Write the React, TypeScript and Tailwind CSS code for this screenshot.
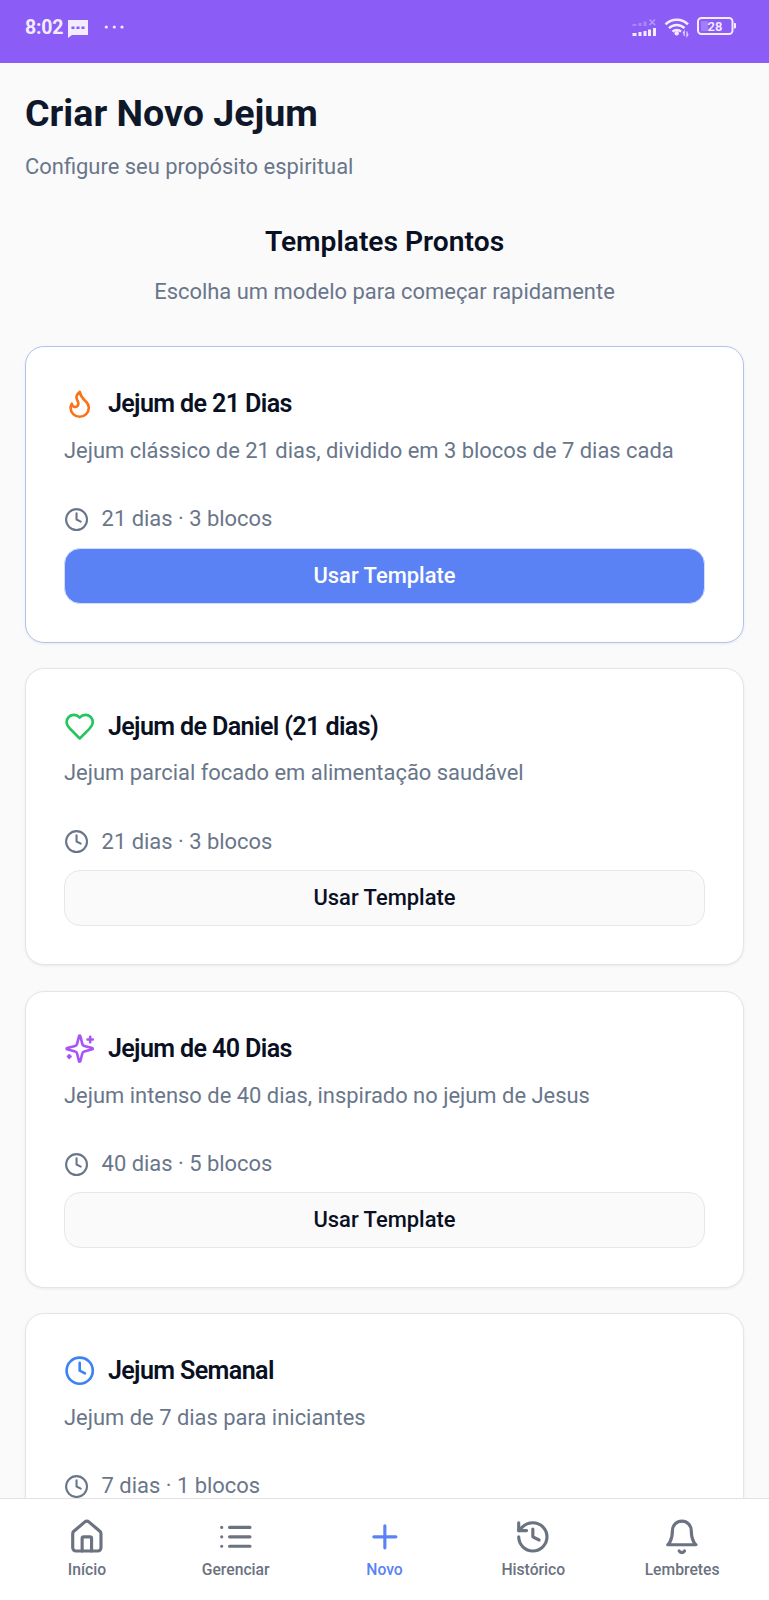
import React from "react";
import { Clock, Flame, Plus } from "lucide-react";

type IconProps = { className?: string };

const stroke = {
  viewBox: "0 0 24 24",
  fill: "none",
  stroke: "currentColor",
  strokeWidth: 2,
  strokeLinecap: "round" as const,
  strokeLinejoin: "round" as const,
};

const HouseIcon = ({ className }: IconProps) => (
  <svg {...stroke} className={className}>
    <path d="M15 21v-8a1 1 0 0 0-1-1h-4a1 1 0 0 0-1 1v8" />
    <path d="M3 10a2 2 0 0 1 .709-1.528l7-5.999a2 2 0 0 1 2.582 0l7 5.999A2 2 0 0 1 21 10v9a2 2 0 0 1-2 2H5a2 2 0 0 1-2-2z" />
  </svg>
);

const ListIcon = ({ className }: IconProps) => (
  <svg {...stroke} className={className}>
    <path d="M3 6h.01M3 12h.01M3 18h.01M8 6h13M8 12h13M8 18h13" />
  </svg>
);

const HistoryIcon = ({ className }: IconProps) => (
  <svg {...stroke} className={className}>
    <path d="M3 12a9 9 0 1 0 9-9 9.75 9.75 0 0 0-6.74 2.74L3 8" />
    <path d="M3 3v5h5" />
    <path d="M12 7v5l4 2" />
  </svg>
);

const BellIcon = ({ className }: IconProps) => (
  <svg {...stroke} className={className}>
    <path d="M6 8a6 6 0 0 1 12 0c0 7 3 9 3 9H3s3-2 3-9" />
    <path d="M10.3 21a1.94 1.94 0 0 0 3.4 0" />
  </svg>
);

const HeartIcon = ({ className }: IconProps) => (
  <svg {...stroke} className={className}>
    <path d="M19 14c1.49-1.46 3-3.21 3-5.5A5.5 5.5 0 0 0 16.5 3c-1.76 0-3 .5-4.5 2-1.5-1.5-2.74-2-4.5-2A5.5 5.5 0 0 0 2 8.5c0 2.3 1.5 4.05 3 5.5l7 7Z" />
  </svg>
);

const SparklesIcon = ({ className }: IconProps) => (
  <svg {...stroke} className={className}>
    <path d="M9.937 15.5A2 2 0 0 0 8.5 14.063l-6.135-1.582a.5.5 0 0 1 0-.962L8.5 9.936A2 2 0 0 0 9.937 8.5l1.582-6.135a.5.5 0 0 1 .963 0L14.063 8.5A2 2 0 0 0 15.5 9.937l6.135 1.581a.5.5 0 0 1 0 .964L15.5 14.063a2 2 0 0 0-1.437 1.437l-1.582 6.135a.5.5 0 0 1-.963 0z" />
    <path d="M20 3v4M22 5h-4M4 17v2M5 18H3" />
  </svg>
);

function StatusBar() {
  return (
    <header className="flex h-[63px] shrink-0 items-start justify-between bg-[#8b5cf6] pl-[25px] pr-[33px] text-[#f3ebff]">
      <div className="flex items-center pt-4">
        <span className="w-[38px] text-[19.5px] font-bold leading-[23px] tracking-[-0.01em]">8:02</span>
        <svg className="ml-[5px] mt-0.5 h-[18px] w-5" viewBox="0 0 20 18">
          <path d="M0 0h20v15H4l-4 3z" fill="currentColor" />
          <path d="M3.5 6.5h3v2.5h-3zM8.5 6.5h3v2.5h-3zM13.5 6.5h3v2.5h-3z" fill="#8b5cf6" />
        </svg>
        <svg className="ml-4 h-4 w-[22px]" viewBox="0 0 22 16">
          <g fill="currentColor">
            <circle cx="2.3" cy="7" r="1.6" />
            <circle cx="10.3" cy="7" r="1.6" />
            <circle cx="18" cy="7" r="1.6" />
          </g>
        </svg>
      </div>
      <svg className="mt-4 h-[22px] w-[104px]" viewBox="632 16 104 22">
        <path d="M632.5 24h4v2h-4zM638.5 23h3v3h-3zM643.5 21.5h3v4.5h-3z" fill="#ab86f9" />
        <path d="M649.5 19.5l5.5 5.5m0-5.5l-5.5 5.5" stroke="#b796fa" strokeWidth="1.7" />
        <path
          d="M632.5 33h4v3h-4zM638.5 32h3v4h-3zM643.5 31h3v5h-3zM648 29.5h3v6.5h-3zM653 28h3v8h-3z"
          fill="currentColor"
        />
        <g fill="none" stroke="currentColor" strokeWidth="2.5">
          <path d="M665.5 24.3a16 16 0 0 1 22.5 0" />
          <path d="M669 28.2a11 11 0 0 1 15.5 0" />
          <path d="M672.5 31.7a6 6 0 0 1 8.5 0" />
        </g>
        <circle cx="676.7" cy="33.3" r="2.2" fill="currentColor" />
        <path d="M684.2 36v-4.5l-1.2 1.8M687 31.5v4.5l1.2-1.8" fill="none" stroke="currentColor" strokeWidth="1.2" opacity=".85" />
        <rect x="698" y="18" width="34.5" height="16" rx="3.5" fill="none" stroke="currentColor" strokeWidth="2" />
        <rect x="701" y="21" width="7" height="10" rx="1" fill="#a67df8" />
        <path d="M734 23h1a1 1 0 0 1 1 1v3.5a1 1 0 0 1-1 1h-1z" fill="currentColor" />
        <text x="715" y="31" textAnchor="middle" fontSize="13" fontWeight="600" fill="currentColor">
          28
        </text>
      </svg>
    </header>
  );
}

type Template = {
  icon: React.ReactNode;
  title: string;
  description: string;
  info: string;
  featured?: boolean;
  action?: string;
};

const templates: Template[] = [
  {
    icon: <Flame className="size-[31.4px] text-[#f97316]" />,
    title: "Jejum de 21 Dias",
    description: "Jejum clássico de 21 dias, dividido em 3 blocos de 7 dias cada",
    info: "21 dias · 3 blocos",
    featured: true,
    action: "Usar Template",
  },
  {
    icon: <HeartIcon className="size-[31.4px] text-[#22c55e]" />,
    title: "Jejum de Daniel (21 dias)",
    description: "Jejum parcial focado em alimentação saudável",
    info: "21 dias · 3 blocos",
    action: "Usar Template",
  },
  {
    icon: <SparklesIcon className="size-[31.4px] text-[#a855f7]" />,
    title: "Jejum de 40 Dias",
    description: "Jejum intenso de 40 dias, inspirado no jejum de Jesus",
    info: "40 dias · 5 blocos",
    action: "Usar Template",
  },
  {
    icon: <Clock className="size-[31.4px] text-[#3b82f6]" />,
    title: "Jejum Semanal",
    description: "Jejum de 7 dias para iniciantes",
    info: "7 dias · 1 blocos",
  },
];

function TemplateCard({ icon, title, description, info, featured, action }: Template) {
  return (
    <article
      className={`h-[297.3px] shrink-0 rounded-[19px] border bg-white px-[38px] pt-[38.3px] shadow-[0_1px_3px_rgba(0,0,0,0.07)] ${
        featured ? "border-[#b3c2ee]" : "border-[#e5e5e7]"
      }`}
    >
      <div className="flex h-[37.7px] items-center gap-[12.5px]">
        {icon}
        <h3 className="text-[25.1px] font-semibold tracking-[-0.025em] text-[#0a1023]">{title}</h3>
      </div>
      <p className="mt-[12px] whitespace-nowrap text-[21.93px] leading-[31.4px] text-[#69768a]">{description}</p>
      <div className="mt-[37.7px] flex h-[31.4px] items-center gap-[12.5px] text-[21.93px] text-[#69768a]">
        <Clock className="size-[25.1px]" />
        <span>{info}</span>
      </div>
      {action && (
        <button
          className={`mt-[12.3px] flex h-[56px] w-full items-center justify-center rounded-[16px] border pt-px text-[21.93px] font-medium ${
            featured ? "border-[#d3dcfa] bg-[#5b82f5] text-white" : "border-[#e7e7e9] bg-[#fafafa] text-[#0a1023]"
          }`}
        >
          {action}
        </button>
      )}
    </article>
  );
}

const tabs = [
  { label: "Início", Icon: HouseIcon },
  { label: "Gerenciar", Icon: ListIcon },
  { label: "Novo", Icon: Plus, active: true },
  { label: "Histórico", Icon: HistoryIcon },
  { label: "Lembretes", Icon: BellIcon },
];

export default function App() {
  return (
    <div className="flex h-[1600px] w-full flex-col overflow-hidden bg-[#fafafa] font-[Roboto,sans-serif]">
      <StatusBar />
      <main className="flex min-h-0 flex-1 flex-col overflow-hidden px-[25px]">
        <h1 className="mt-[27px] shrink-0 text-[37.6px] font-bold leading-[47px] text-[#0f172a]">Criar Novo Jejum</h1>
        <p className="mt-[14px] shrink-0 text-[21.93px] leading-[31px] text-[#69768a]">Configure seu propósito espiritual</p>
        <section className="mt-[38px] flex shrink-0 flex-col items-center">
          <h2 className="text-[28.2px] font-semibold leading-[44px] text-[#0a1023]">Templates Prontos</h2>
          <p className="mt-[12px] text-[21.93px] leading-[31px] text-[#69768a]">Escolha um modelo para começar rapidamente</p>
        </section>
        <div className="mt-[38.8px] flex flex-col gap-[25.1px]">
          {templates.map((t) => (
            <TemplateCard key={t.title} {...t} />
          ))}
        </div>
      </main>
      <nav className="flex h-[102px] shrink-0 border-t border-[#e2e2e5] bg-white px-[12.5px]">
        {tabs.map(({ label, Icon, active }) => (
          <div
            key={label}
            className={`flex flex-1 flex-col items-center pt-[19px] ${active ? "text-[#5b82f5]" : "text-[#6b7280]"}`}
          >
            <Icon className="size-[37.7px]" />
            <span className="mt-[3px] text-[15.7px] font-medium leading-[22px]">{label}</span>
          </div>
        ))}
      </nav>
    </div>
  );
}
